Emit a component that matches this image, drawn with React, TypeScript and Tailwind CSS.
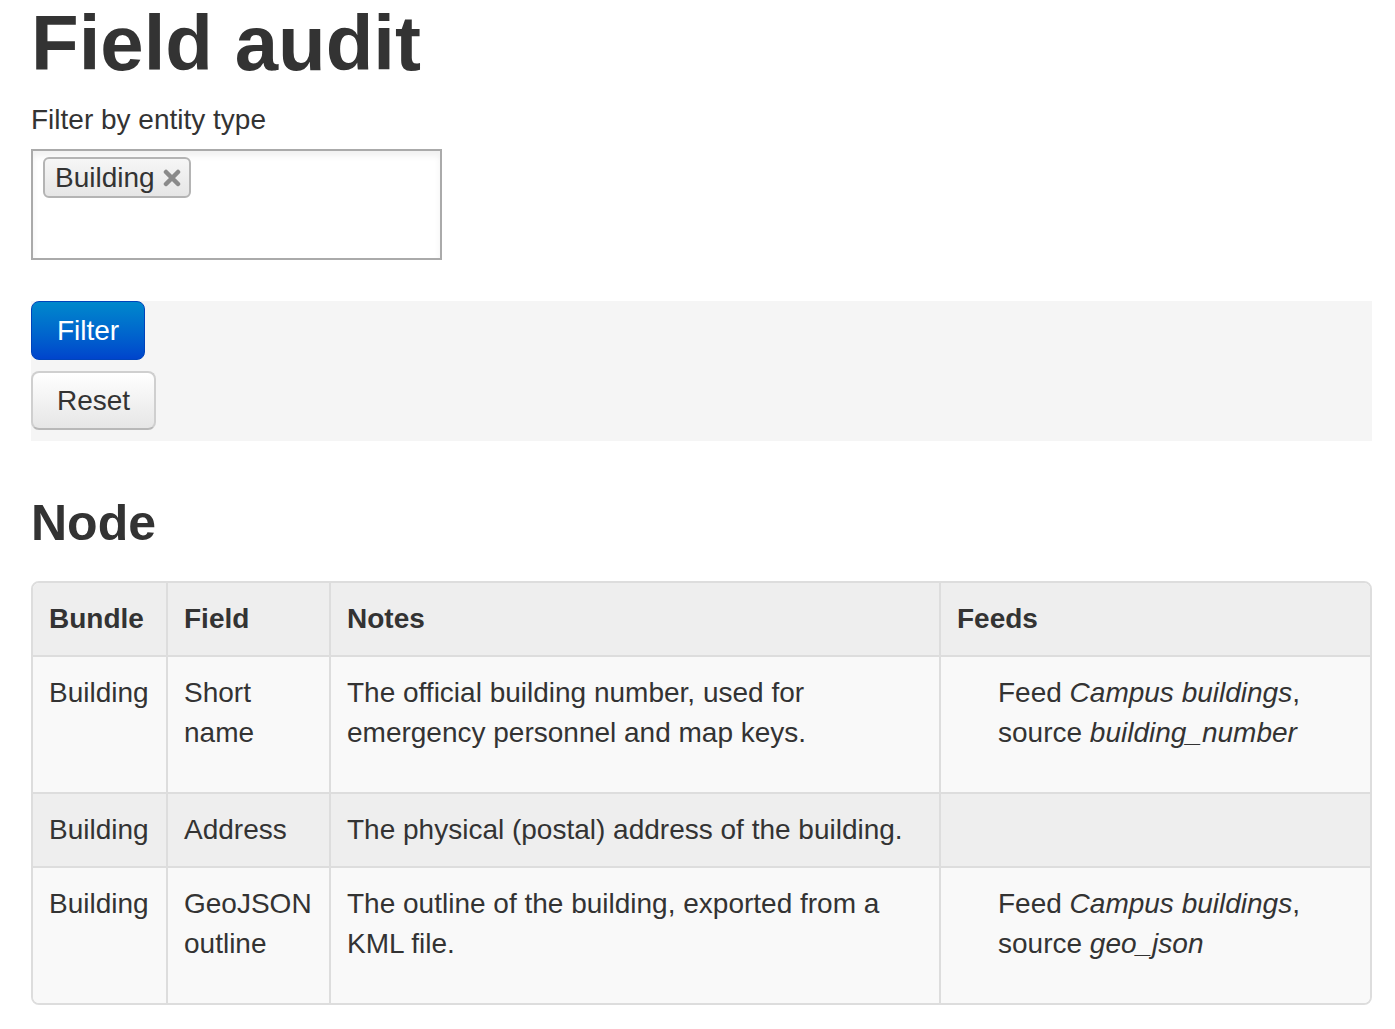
import React from "react";

const cell = "px-[16px] py-[16px] text-[28px] leading-[40px] align-top text-left";

export default function App() {
  return (
    <div className="min-h-[1029px] bg-white pl-[31px] pt-[3px] text-[#333] font-['Liberation_Sans',Arial,sans-serif]">
      <h1 className="text-[78px] font-bold leading-[80px]">Field audit</h1>
      <div className="mt-[17px] mb-[9px] text-[28px] leading-[40px]">Filter by entity type</div>
      <div className="h-[111px] w-[411px] border-2 border-[#aaa] bg-white pl-[10px] pt-[6px] shadow-[inset_0_5px_6px_rgba(0,0,0,0.06)]">
        <div className="inline-flex h-[41px] items-center rounded-[6px] border-2 border-[#b4b4b4] bg-linear-to-b from-[#f6f6f6] to-[#e6e6e6] pl-[10px] pr-[8px] text-[28px] leading-[36px]">
          <span>Building</span>
          <svg className="ml-[8px]" width="18" height="18" viewBox="0 0 18 18">
            <path d="M3 3 L15 15 M15 3 L3 15" stroke="#8a8a8a" strokeWidth="4.5" strokeLinecap="round" />
          </svg>
        </div>
      </div>

      <div className="mt-[41px] flex h-[140px] w-[1341px] flex-col items-start bg-[#f5f5f5]">
        <button className="h-[59px] w-[114px] rounded-[8px] border border-[#0044bb] bg-linear-to-b from-[#0088cc] to-[#0044cc] text-[28px] leading-[40px] text-white">
          Filter
        </button>
        <button className="mt-[11px] h-[59px] w-[125px] rounded-[8px] border-2 border-[#cfcfcf] border-b-[#b8b8b8] bg-linear-to-b from-white to-[#e6e6e6] text-[28px] leading-[40px] text-[#333]">
          Reset
        </button>
      </div>

      <h2 className="mt-[42px] mb-[18px] text-[50px] font-bold leading-[80px]">Node</h2>

      <div className="w-[1341px] overflow-hidden rounded-[8px] border-2 border-[#ddd]">
        <table className="w-full table-fixed border-separate border-spacing-0">
          <colgroup>
            <col className="w-[133px]" />
            <col className="w-[163px]" />
            <col className="w-[610px]" />
            <col className="w-[431px]" />
          </colgroup>
          <thead>
            <tr className="bg-[#eeeeee]">
              <th className={`${cell} font-bold`}>Bundle</th>
              <th className={`${cell} border-l-2 border-[#ddd] font-bold`}>Field</th>
              <th className={`${cell} border-l-2 border-[#ddd] font-bold`}>Notes</th>
              <th className={`${cell} border-l-2 border-[#ddd] font-bold`}>Feeds</th>
            </tr>
          </thead>
          <tbody>
            <tr className="bg-[#f9f9f9]">
              <td className={`${cell} border-t-2 border-[#ddd]`}>Building</td>
              <td className={`${cell} border-t-2 border-l-2 border-[#ddd]`}>Short name</td>
              <td className={`${cell} border-t-2 border-l-2 border-[#ddd]`}>
                The official building number, used for emergency personnel and map keys.
              </td>
              <td className={`${cell} border-t-2 border-l-2 border-[#ddd]`}>
                <ul className="mb-[23px] list-none pl-[41px]">
                  <li>
                    Feed <em>Campus buildings</em>, source <em>building_number</em>
                  </li>
                </ul>
              </td>
            </tr>
            <tr className="bg-[#eeeeee]">
              <td className={`${cell} border-t-2 border-[#ddd]`}>Building</td>
              <td className={`${cell} border-t-2 border-l-2 border-[#ddd]`}>Address</td>
              <td className={`${cell} border-t-2 border-l-2 border-[#ddd] whitespace-nowrap`}>
                The physical (postal) address of the building.
              </td>
              <td className={`${cell} border-t-2 border-l-2 border-[#ddd]`}></td>
            </tr>
            <tr className="bg-[#f9f9f9]">
              <td className={`${cell} border-t-2 border-[#ddd]`}>Building</td>
              <td className={`${cell} border-t-2 border-l-2 border-[#ddd]`}>GeoJSON outline</td>
              <td className={`${cell} border-t-2 border-l-2 border-[#ddd]`}>
                The outline of the building, exported from a KML file.
              </td>
              <td className={`${cell} border-t-2 border-l-2 border-[#ddd]`}>
                <ul className="mb-[23px] list-none pl-[41px]">
                  <li>
                    Feed <em>Campus buildings</em>, source <em>geo_json</em>
                  </li>
                </ul>
              </td>
            </tr>
          </tbody>
        </table>
      </div>
    </div>
  );
}
